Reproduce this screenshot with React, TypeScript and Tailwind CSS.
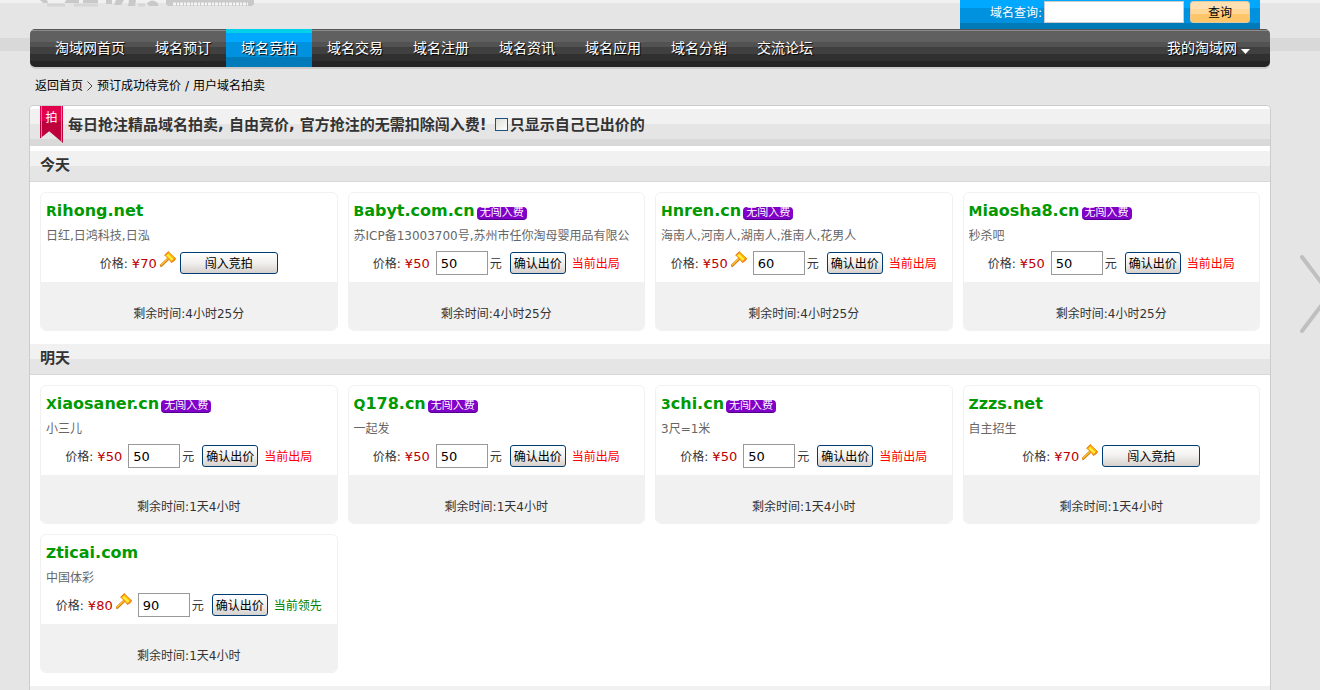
const NAV_ITEMS = ['淘域网首页', '域名预订', '域名竞拍', '域名交易', '域名注册', '域名资讯', '域名应用', '域名分销', '交流论坛'];

type Status = 'out' | 'lead' | 'idle';

interface Auction {
    domain: string;
    description: string;
    price: number;
    bid?: number;
    status: Status;
    entryFee: boolean;
    remaining: string;
}

const TODAY: Auction[] = [
    { domain: 'Rihong.net', description: '日红,日鸿科技,日泓', price: 70, status: 'idle', entryFee: true, remaining: '4小时25分' },
    { domain: 'Babyt.com.cn', description: '苏ICP备13003700号,苏州市任你淘母婴用品有限公', price: 50, bid: 50, status: 'out', entryFee: false, remaining: '4小时25分' },
    { domain: 'Hnren.cn', description: '海南人,河南人,湖南人,淮南人,花男人', price: 50, bid: 60, status: 'out', entryFee: false, remaining: '4小时25分' },
    { domain: 'Miaosha8.cn', description: '秒杀吧', price: 50, bid: 50, status: 'out', entryFee: false, remaining: '4小时25分' },
];

const TOMORROW: Auction[] = [
    { domain: 'Xiaosaner.cn', description: '小三儿', price: 50, bid: 50, status: 'out', entryFee: false, remaining: '1天4小时' },
    { domain: 'Q178.cn', description: '一起发', price: 50, bid: 50, status: 'out', entryFee: false, remaining: '1天4小时' },
    { domain: '3chi.cn', description: '3尺=1米', price: 50, bid: 50, status: 'out', entryFee: false, remaining: '1天4小时' },
    { domain: 'Zzzs.net', description: '自主招生', price: 70, status: 'idle', entryFee: true, remaining: '1天4小时' },
    { domain: 'Zticai.com', description: '中国体彩', price: 80, bid: 90, status: 'lead', entryFee: true, remaining: '1天4小时' },
];

// domains where the hammer is shown next to the price
const HAMMER = ['Rihong.net', 'Hnren.cn', 'Zzzs.net', 'Zticai.com'];

function HammerIcon() {
    return (
        <svg width="16" height="16" viewBox="0 0 16 16" className="mb-2 shrink-0" aria-hidden="true">
            <path d="M1.200 14.600 7.500 8.500" stroke="#d08018" strokeWidth="2.800" strokeLinecap="round" />
            <path d="M1.200 14 7.500 8" stroke="#ffc030" strokeWidth="1.300" strokeLinecap="round" />
            <path d="M5 4.200 8.400.8 15.400 7.400 14.600 9.600 11.400 11.200z" fill="#ffb800" stroke="#f09018" strokeLinejoin="round" />
            <path d="M7.200 3.600 13 9.200" stroke="#ffee40" strokeWidth="2.200" />
            <path d="M5 4.200 8.400.8M11.400 11.200l4-3.800" stroke="#f08020" strokeWidth="1.200" strokeLinecap="round" />
        </svg>
    );
}

// only the lower edge of the logo is inside the page
function LogoMark() {
    return (
        <svg width="214" height="7" viewBox="0 0 214 7" aria-hidden="true">
            <g fill="#c9c9c9">
                <path d="M0 0h7l1 3H3z" />
                <path d="M25 1q5-3 10-1l4 0v3H25z" />
                <path d="M43 0h15v3H43z" />
                <path d="M66 0h6v4h-6zM76 0h8l-3 5h-7z" />
                <path d="M89 0h7l-1 6h-7z" />
                <path d="M107 3q5-5 11 0v3h-9z" />
                <path d="M126 0h88v4l-2 2h-84l-2-2z" />
            </g>
            <path d="M7 5h18M34 5h24M98 5h7" stroke="#d6d6d6" strokeWidth="3" />
            <path d="M133 4h75" stroke="#f4f4f4" strokeWidth="3" strokeDasharray="3 1 2 1" />
        </svg>
    );
}

const BUTTON =
    'h-[22px] shrink-0 rounded-[3px] border border-[#003c74] bg-gradient-to-b from-white via-[#f1f0ee] to-[#d6d0cc] pt-px text-xs leading-5 text-black';

function AuctionCard({ auction }: { auction: Auction }) {
    const { domain, description, price, bid, status, entryFee, remaining } = auction;

    return (
        <article className="overflow-hidden rounded-md border border-[#f1f1f1]">
            <div className="h-[89px] px-[5px] pt-1.5">
                <div className="flex h-6 items-center">
                    <h3 className="text-base leading-6 font-bold first-letter:text-sm">
                        <a href="#" className="text-[#090]">{domain}</a>
                    </h3>
                    {!entryFee && (
                        <span className="mt-1 ml-0.5 h-[13px] w-[50px] rounded-[4px] border-b border-[#50008c] bg-[#8000c8] text-center text-[11px] leading-3 text-white">
                            无闯入费
                        </span>
                    )}
                </div>
                <p className="h-[26px] truncate text-xs leading-[26px] text-[#666]">{description}</p>
                <div className="flex h-7 items-center justify-center whitespace-nowrap">
                    <span className="pt-0.5">价格:</span>
                    <span className="ml-1 pt-0.5 text-[13px] text-[#b00]">¥{price}</span>
                    {HAMMER.includes(domain) && <span className="ml-[3px] flex"><HammerIcon /></span>}
                    {bid !== undefined ? (
                        <>
                            <input
                                aria-label={domain + ' 出价'}
                                defaultValue={bid}
                                className="ml-1.5 h-6 w-[52px] shrink-0 border border-[#999] bg-white px-1 text-[13px] text-black"
                            />
                            <span className="ml-0.5 pt-0.5">元</span>
                            <button type="button" className={BUTTON + ' ml-2 w-14'}>确认出价</button>
                            <span className={status === 'lead' ? 'ml-1.5 pt-0.5 text-[#008000]' : 'ml-1.5 pt-0.5 text-[#f00]'}>
                                {status === 'lead' ? '当前领先' : '当前出局'}
                            </span>
                        </>
                    ) : (
                        <button type="button" className={BUTTON + ' ml-1 w-[98px]'}>闯入竞拍</button>
                    )}
                </div>
            </div>
            <div className="h-12 bg-[#f1f1f1] pt-[23px] text-center leading-[18px]">剩余时间:{remaining}</div>
        </article>
    );
}

function AuctionSection({ title, auctions }: { title: string; auctions: Auction[] }) {
    return (
        <section>
            <h2 className="flex h-[31px] items-center border-b border-[#d8d8d8] bg-linear-to-b from-[#f1f1f1] from-50% to-[#e5e5e5] to-50% px-2.5 text-[15px] font-bold">
                <span className="pb-px">{title}</span>
            </h2>
            <div className="grid grid-cols-4 gap-2.5 px-2.5 pt-2.5 pb-[13px]">
                {auctions.map((auction) => (
                    <AuctionCard key={auction.domain} auction={auction} />
                ))}
            </div>
        </section>
    );
}

export default function App() {
    return (
        <div className="relative min-h-screen overflow-hidden bg-[#e5e5e5] bg-[linear-gradient(#f1f1f1_3px,#e5e5e5_3px,#e5e5e5_38px,#d9d9d9_38px,#d9d9d9_51px,#e5e5e5_51px)] font-['DejaVu_Sans','Noto_Sans_CJK_SC',sans-serif] text-xs text-[#333]">
            <div className="pr-[50px] pl-[30px]">
                <header className="flex h-[29px] items-start justify-between px-2.5">
                    <LogoMark />
                    <form className="flex h-[29px] w-[300px] items-start justify-end bg-[linear-gradient(#00a8ff_8px,#0092df_8px,#0092df_23px,#007ab9_23px)] pr-2.5">
                        <label htmlFor="domain" className="leading-[26px] text-white">域名查询:</label>
                        <input id="domain" className="mt-px ml-0.5 h-[22px] w-[140px] border border-[#ccc] bg-white px-1" />
                        <button type="submit" className="mt-px ml-1.5 h-[22px] w-[60px] rounded-[3px] border border-[#e0c8a0] bg-[linear-gradient(#ffe0b2_7px,#ffd796_7px,#ffd796_12px,#ffc569_12px)] pt-px text-xs text-black">
                            查询
                        </button>
                    </form>
                </header>

                <nav className="flex h-[38px] items-stretch rounded-[5px] bg-[linear-gradient(#555_1px,#8c8c8c_1px,#8c8c8c_2px,#606060_2px,#606060_13px,#525252_13px,#525252_18px,#404040_18px,#404040_25px,#303030_25px,#303030_32px,#242424_32px)] px-2.5 text-sm text-white shadow-[0_2px_0_#ccc]">
                    {NAV_ITEMS.map((item) => (
                        <a
                            key={item}
                            href="#"
                            className={
                                item === '域名竞拍'
                                    ? 'flex items-center bg-[linear-gradient(#00d0e8_4px,#00a8ff_4px,#00a8ff_13px,#0092df_13px,#0092df_28px,#007ab9_28px)] px-[15px] text-shadow-[1px_1px_1px_#000]'
                                    : 'flex items-center px-[15px] text-shadow-[1px_1px_1px_#000]'
                            }
                        >
                            {item}
                        </a>
                    ))}
                    <a href="#" className="ml-auto flex items-center pr-2.5 text-shadow-[1px_1px_1px_#000]">
                        我的淘域网
                        <svg width="9" height="5" viewBox="0 0 9 5" className="mt-1.5 ml-1" aria-hidden="true">
                            <path d="M0 0h9L4.500 5z" fill="#fff" />
                        </svg>
                    </a>
                </nav>

                <div className="flex h-[38px] items-center px-[5px] text-black">
                    <a href="#">返回首页</a>
                    <svg width="6" height="10" viewBox="0 0 6 10" className="mx-1" aria-hidden="true">
                        <path d="M.5.5 5 5 .5 9.500" fill="none" stroke="#444" />
                    </svg>
                    <a href="#">预订成功待竞价</a>
                    <span className="mx-1">/</span>
                    <a href="#">用户域名拍卖</a>
                </div>
            </div>

            <main className="mr-[49px] ml-[29px] rounded-t-[5px] border border-b-0 border-[#ccc] bg-white">
                <div className="mb-[5px] flex h-10 items-start rounded-t-[4px] bg-[linear-gradient(#fff_3px,#f1f1f1_3px,#f1f1f1_18px,#e5e5e5_18px,#e5e5e5_33px,#d9d9d9_33px)] px-2.5 text-[15px] font-bold">
                    <span className="flex h-[37px] w-[23px] shrink-0 justify-center bg-[linear-gradient(90deg,transparent_1px,#f27a9f_1px,#f27a9f_2px,transparent_2px,transparent_21px,#f27a9f_21px,#f27a9f_22px,transparent_22px),linear-gradient(#e1004b_15px,#bd003c_15px)] pt-[3px] text-xs leading-[18px] font-normal text-white [clip-path:polygon(0_0,100%_0,100%_100%,40%_68%,0_88%)]">
                        拍
                    </span>
                    <h1 className="ml-[5px] leading-[38px]">每日抢注精品域名拍卖, 自由竞价, 官方抢注的无需扣除闯入费!</h1>
                    <label className="ml-2 flex items-center leading-[38px]">
                        <input type="checkbox" className="mr-0.5 mb-0.5 size-[13px] appearance-none border border-[#1c5180] bg-linear-to-br from-[#dcdcd7] to-white" />
                        只显示自己已出价的
                    </label>
                </div>
                <AuctionSection title="今天" auctions={TODAY} />
                <AuctionSection title="明天" auctions={TOMORROW} />
                <div className="h-8 bg-[#f1f1f1]" />
            </main>

            <button type="button" aria-label="下一页" className="absolute top-[254px] left-full -ml-5 w-10">
                <svg width="40" height="80" viewBox="0 0 40 80" aria-hidden="true">
                    <path d="M2 3 30 40 2 77" fill="none" stroke="#bfbfbf" strokeWidth="4" strokeLinecap="round" />
                </svg>
            </button>
        </div>
    );
}
